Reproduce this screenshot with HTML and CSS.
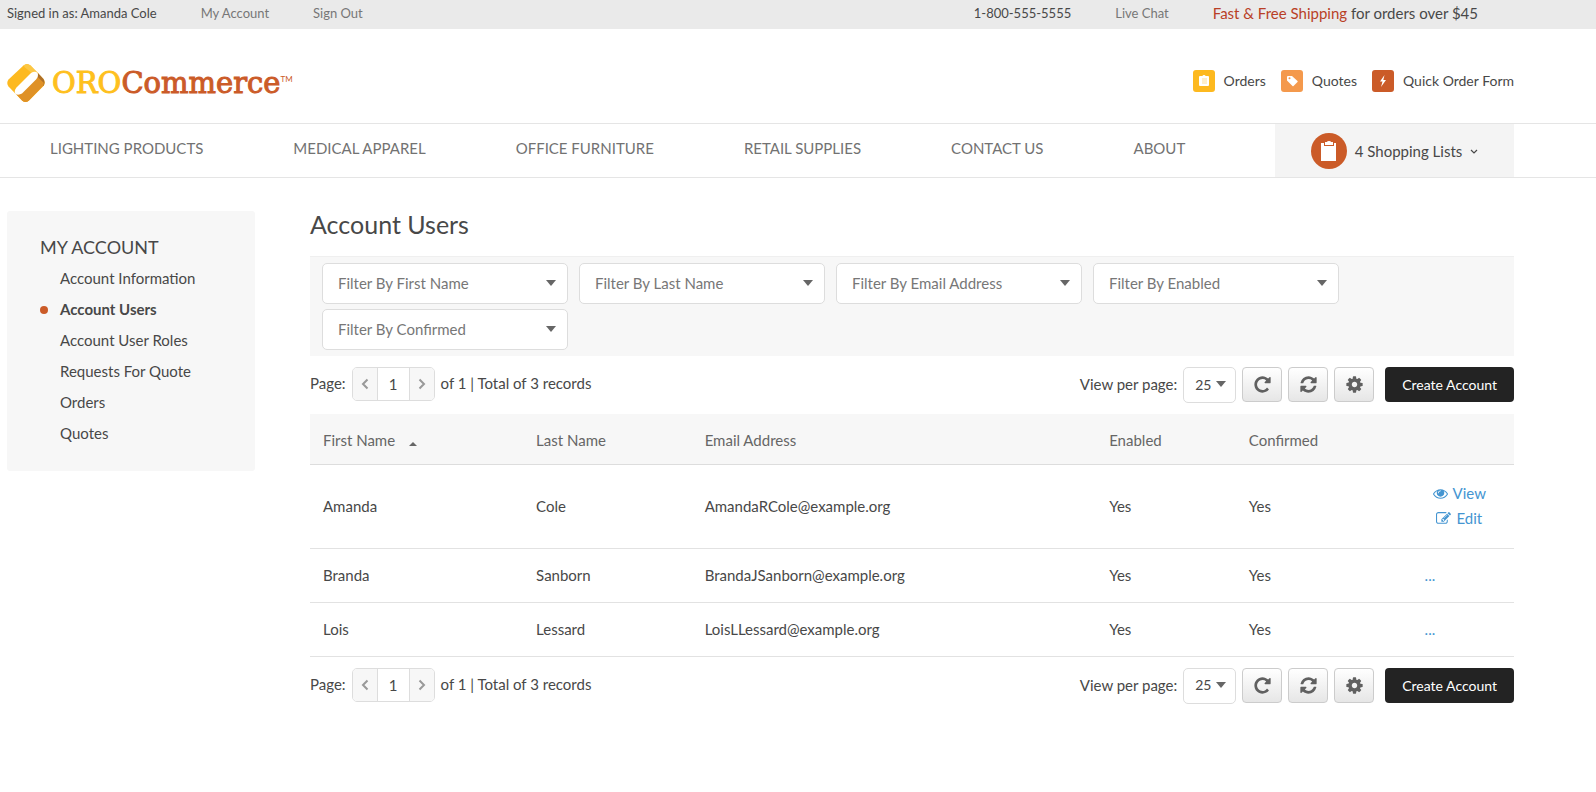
FILE: index.html
```html
<!DOCTYPE html>
<html lang="en">
<head>
    <meta charset="UTF-8">
    <meta name="viewport" content="width=device-width, initial-scale=1.0">
    <title>Account Users</title>
    <link rel="stylesheet" href="styles.css">
</head>
<body>
    <!-- shared icons -->
    <svg class="sprite" aria-hidden="true">
        <symbol id="icon-repeat" viewBox="0 0 1792 1792"><path d="M1664 256v448q0 26-19 45t-45 19h-448q-42 0-59-40-17-39 14-69l138-138q-148-137-349-137-104 0-198.500 40.500t-163.500 109.500-109.500 163.500-40.500 198.500 40.500 198.500 109.500 163.500 163.500 109.500 198.500 40.500q119 0 225-52t179-147q7-10 23-12 15 0 25 9l137 138q9 8 9.500 20.500t-7.500 22.500q-109 132-264 204.500t-327 72.500q-156 0-298-61t-245-164-164-245-61-298 61-298 164-245 245-164 298-61q147 0 284.500 55.500t244.500 156.500l130-129q29-31 70-14 39 17 39 59z"/></symbol>
        <symbol id="icon-refresh" viewBox="0 0 1792 1792"><path d="M1639 1056q0 5-1 7-64 268-268 434.500t-478 166.500q-146 0-282.500-55t-243.500-157l-129 129q-19 19-45 19t-45-19-19-45v-448q0-26 19-45t45-19h448q26 0 45 19t19 45-19 45l-137 137q71 66 161 102t187 36q134 0 250-65t186-179q11-17 53-117 8-23 30-23h192q13 0 22.500 9.500t9.500 22.500zm25-800v448q0 26-19 45t-45 19h-448q-26 0-45-19t-19-45 19-45l138-138q-148-137-349-137-134 0-250 65t-186 179q-11 17-53 117-8 23-30 23h-199q-13 0-22.500-9.500t-9.500-22.500v-7q65-268 270-434.500t480-166.500q146 0 284 55.500t245 156.500l130-129q19-19 45-19t45 19 19 45z"/></symbol>
        <symbol id="icon-cog" viewBox="0 0 1792 1792"><path d="M1152 896q0-106-75-181t-181-75-181 75-75 181 75 181 181 75 181-75 75-181zm512-109v222q0 12-8 23t-20 13l-185 28q-19 54-39 91 35 50 107 138 10 12 10 25t-9 23q-27 37-99 108t-94 71q-12 0-26-9l-138-108q-44 23-91 38-16 136-29 186-7 28-36 28h-222q-14 0-24.500-8.500t-11.500-21.500l-28-184q-49-16-90-37l-141 107q-10 9-25 9-14 0-25-11-126-114-165-168-7-10-7-23 0-12 8-23 15-21 51-66.500t54-70.500q-27-50-41-99l-183-27q-13-2-21-12.500t-8-23.500v-222q0-12 8-23t19-13l186-28q14-46 39-92-40-57-107-138-10-12-10-24 0-10 9-23 26-36 98.500-107.500t94.500-71.500q13 0 26 10l138 107q44-23 91-38 16-136 29-186 7-28 36-28h222q14 0 24.500 8.500t11.500 21.500l28 184q49 16 90 37l142-107q9-9 24-9 13 0 25 10 129 119 165 170 7 8 7 22 0 12-8 23-15 21-51 66.500t-54 70.500q26 50 41 98l183 28q13 2 21 12.500t8 23.500z"/></symbol>
        <symbol id="icon-eye" viewBox="0 0 1792 1792"><path d="M1664 960q-152-236-381-353 61 104 61 225 0 185-131.500 316.500t-316.500 131.500-316.500-131.500-131.500-316.500q0-121 61-225-229 117-381 353 133 205 333.500 326.500t434.500 121.500 434.500-121.500 333.500-326.500zm-720-384q0-20-14-34t-34-14q-125 0-214.500 89.500t-89.500 214.500q0 20 14 34t34 14 34-14 14-34q0-86 61-147t147-61q20 0 34-14t14-34zm848 384q0 34-20 69-140 230-376.500 368.500t-499.500 138.500-499.500-139-376.500-368q-20-35-20-69t20-69q140-229 376.500-368t499.500-139 499.500 139 376.500 368q20 35 20 69z"/></symbol>
        <symbol id="icon-edit" viewBox="0 0 1792 1792"><path d="M888 1184l116-116-152-152-116 116v56h96v96h56zm440-720q-16-16-33 1l-350 350q-17 17-1 33t33-1l350-350q17-17 1-33zm80 594v190q0 119-84.500 203.500t-203.500 84.500h-832q-119 0-203.500-84.500t-84.500-203.500v-832q0-119 84.500-203.500t203.500-84.500h832q63 0 117 25 15 7 18 23 3 17-9 29l-49 49q-14 14-32 8-23-6-45-6h-832q-66 0-113 47t-47 113v832q0 66 47 113t113 47h832q66 0 113-47t47-113v-126q0-13 9-22l64-64q15-15 35-7t20 29zm-96-738l288 288-672 672h-288v-288zm444 132l-92 92-288-288 92-92q28-28 68-28t68 28l152 152q28 28 28 68t-28 68z"/></symbol>
        <symbol id="icon-left" viewBox="0 0 8 12"><path d="M6.500 1.500L2 6l4.500 4.500" fill="none" stroke="currentColor" stroke-width="2"/></symbol>
        <symbol id="icon-right" viewBox="0 0 8 12"><path d="M1.500 1.500L6 6l-4.500 4.500" fill="none" stroke="currentColor" stroke-width="2"/></symbol>
    </svg>

    <div class="topbar">
        <div class="topbar-left">
            <span>Signed in as: Amanda Cole</span>
            <a href="#">My Account</a>
            <a href="#">Sign Out</a>
        </div>
        <div class="topbar-right">
            <span>1-800-555-5555</span>
            <a href="#">Live Chat</a>
            <span class="promo"><strong>Fast &amp; Free Shipping</strong> for orders over $45</span>
        </div>
    </div>

    <header class="header">
        <a class="logo" href="#">
            <svg class="logo-mark" viewBox="0 0 38 38" aria-hidden="true">
                <path d="M16.500 1.500q3.500-3 7 0L36.500 15q2.500 3.500 0 7L22 36.500q-3.500 3-7 0L1.500 22.500q-2.500-3.500 0-7z" fill="#fdb91f"/>
                <path d="M16.500 1.500q3.500-3 7 0L31 9l-4 2-9-7.500z" fill="#fcc745"/>
                <path d="M31 9l5.500 6q2 3.500 0 7L26 18z" fill="#ad6f28"/>
                <path d="M29.500 12l7 6.500q.5 1.500-.5 3.500L22 36.500q-3.500 3-7 0L9.500 30.500z" fill="#df9126"/>
                <path d="M24 9q4-2.500 6.500 0 1.500 3-1.500 6.500L15 29.500q-3.500 2-6.500.5-2-3 1-6.500z" fill="#fff"/>
            </svg>
            <span class="logo-text"><span class="logo-oro">ORO</span>Commerce</span><span class="logo-tm">TM</span>
        </a>
        <div class="quick-links">
            <a href="#">
                <svg class="quick-icon quick-orders" viewBox="0 0 22 22" aria-hidden="true">
                    <path d="M7 6h2.500q0-1 1.500-1t1.500 1H15q1 0 1 1v8q0 1-1 1H7q-1 0-1-1V7q0-1 1-1z" fill="#fff"/>
                    <path d="M9 8h5v6H9z" fill="#fdeecb"/>
                </svg>
                Orders
            </a>
            <a href="#">
                <svg class="quick-icon quick-quotes" viewBox="0 0 22 22" aria-hidden="true">
                    <path fill-rule="evenodd" d="M6 7q0-1 1-1h4l5.500 5q.5.500 0 1l-4 4q-.5.500-1 0L6 10.500zm1.500 1.200a1 1 0 1 0 2 0a1 1 0 1 0-2 0z" fill="#fff"/>
                </svg>
                Quotes
            </a>
            <a href="#">
                <svg class="quick-icon quick-form" viewBox="0 0 22 22" aria-hidden="true">
                    <path d="M12.500 5L8 11.500h2.500L9 17l5-7h-2.700z" fill="#fff"/>
                </svg>
                Quick Order Form
            </a>
        </div>
    </header>

    <div class="navbar">
        <nav class="menu">
            <a href="#">LIGHTING PRODUCTS</a>
            <a href="#">MEDICAL APPAREL</a>
            <a href="#">OFFICE FURNITURE</a>
            <a href="#">RETAIL SUPPLIES</a>
            <a href="#">CONTACT US</a>
            <a href="#">ABOUT</a>
        </nav>
        <button class="lists" type="button">
            <svg class="lists-icon" viewBox="0 0 36 36" aria-hidden="true">
                <circle cx="18" cy="18" r="18" fill="#cb5b28"/>
                <path d="M10 10h3v3h10v-3h2v18H10z" fill="#fff"/>
                <path d="M14 9h2q0-1 2-1t2 1h2v3h-8z" fill="#fff"/>
            </svg>
            4 Shopping Lists
            <svg class="lists-arrow" viewBox="0 0 8 8" aria-hidden="true"><path d="M1 3l3 3 3-3" fill="none" stroke="currentColor" stroke-width="1.200"/></svg>
        </button>
    </div>

    <div class="page">
        <aside class="sidebar">
            <h2>MY ACCOUNT</h2>
            <ul>
                <li><a href="#">Account Information</a></li>
                <li class="active"><a href="#">Account Users</a></li>
                <li><a href="#">Account User Roles</a></li>
                <li><a href="#">Requests For Quote</a></li>
                <li><a href="#">Orders</a></li>
                <li><a href="#">Quotes</a></li>
            </ul>
        </aside>

        <main class="content">
            <h1>Account Users</h1>

            <div class="filters">
                <select aria-label="First name filter"><option>Filter By First Name</option></select>
                <select aria-label="Last name filter"><option>Filter By Last Name</option></select>
                <select aria-label="Email address filter"><option>Filter By Email Address</option></select>
                <select aria-label="Enabled filter"><option>Filter By Enabled</option></select>
                <select aria-label="Confirmed filter"><option>Filter By Confirmed</option></select>
            </div>

            <div class="toolbar">
                <div class="pager">
                    <label for="page-top">Page:</label>
                    <div class="pager-box">
                        <button type="button" aria-label="Previous page"><svg><use href="#icon-left"/></svg></button>
                        <input type="text" id="page-top" value="1">
                        <button type="button" aria-label="Next page"><svg><use href="#icon-right"/></svg></button>
                    </div>
                    <span>of 1 | Total of 3 records</span>
                </div>
                <div class="tools">
                    <label for="size-top">View per page:</label>
                    <select class="page-size" id="size-top"><option>10</option><option selected>25</option><option>50</option></select>
                    <button class="tool" type="button" aria-label="Refresh"><svg><use href="#icon-repeat"/></svg></button>
                    <button class="tool" type="button" aria-label="Reset"><svg><use href="#icon-refresh"/></svg></button>
                    <button class="tool" type="button" aria-label="Grid settings"><svg><use href="#icon-cog"/></svg></button>
                    <button class="create" type="button">Create Account</button>
                </div>
            </div>

            <table class="grid">
                <colgroup>
                    <col class="col-first">
                    <col class="col-last">
                    <col class="col-email">
                    <col class="col-enabled">
                    <col class="col-confirmed">
                    <col class="col-actions">
                </colgroup>
                <thead>
                    <tr>
                        <th>First Name <span class="sort"></span></th>
                        <th>Last Name</th>
                        <th>Email Address</th>
                        <th>Enabled</th>
                        <th>Confirmed</th>
                        <th></th>
                    </tr>
                </thead>
                <tbody>
                    <tr>
                        <td>Amanda</td>
                        <td>Cole</td>
                        <td>AmandaRCole@example.org</td>
                        <td>Yes</td>
                        <td>Yes</td>
                        <td>
                            <div class="actions">
                                <a href="#"><svg><use href="#icon-eye"/></svg>View</a>
                                <a href="#"><svg><use href="#icon-edit"/></svg>Edit</a>
                            </div>
                        </td>
                    </tr>
                    <tr>
                        <td>Branda</td>
                        <td>Sanborn</td>
                        <td>BrandaJSanborn@example.org</td>
                        <td>Yes</td>
                        <td>Yes</td>
                        <td><a class="more" href="#">...</a></td>
                    </tr>
                    <tr>
                        <td>Lois</td>
                        <td>Lessard</td>
                        <td>LoisLLessard@example.org</td>
                        <td>Yes</td>
                        <td>Yes</td>
                        <td><a class="more" href="#">...</a></td>
                    </tr>
                </tbody>
            </table>

            <div class="toolbar">
                <div class="pager">
                    <label for="page-bottom">Page:</label>
                    <div class="pager-box">
                        <button type="button" aria-label="Previous page"><svg><use href="#icon-left"/></svg></button>
                        <input type="text" id="page-bottom" value="1">
                        <button type="button" aria-label="Next page"><svg><use href="#icon-right"/></svg></button>
                    </div>
                    <span>of 1 | Total of 3 records</span>
                </div>
                <div class="tools">
                    <label for="size-bottom">View per page:</label>
                    <select class="page-size" id="size-bottom"><option>10</option><option selected>25</option><option>50</option></select>
                    <button class="tool" type="button" aria-label="Refresh"><svg><use href="#icon-repeat"/></svg></button>
                    <button class="tool" type="button" aria-label="Reset"><svg><use href="#icon-refresh"/></svg></button>
                    <button class="tool" type="button" aria-label="Grid settings"><svg><use href="#icon-cog"/></svg></button>
                    <button class="create" type="button">Create Account</button>
                </div>
            </div>
        </main>
    </div>
</body>
</html>
```
FILE: styles.css
```css
* {
    box-sizing: border-box;
}
body {
    font-family: Lato, sans-serif;
    font-size: 15px;
    line-height: 20px;
    color: #484848;
    background: #fff;
    margin: 0;
}
a {
    color: inherit;
    text-decoration: none;
}
button, input, select {
    font-family: inherit;
    font-size: 15px;
    color: inherit;
    margin: 0;
}
button {
    cursor: pointer;
}
.sprite {
    display: none;
}

/* top bar */
.topbar {
    display: flex;
    justify-content: space-between;
    height: 29px;
    padding: 0 118px 0 7px;
    background: #eaeaea;
    font-size: 13px;
    line-height: 27px;
}
.topbar-left, .topbar-right {
    display: flex;
    gap: 44px;
}
.topbar a {
    color: #777;
}
.promo {
    font-size: 15px;
}
.promo strong {
    color: #b93f26;
    font-weight: normal;
}

/* header */
.header {
    display: flex;
    justify-content: space-between;
    align-items: center;
    height: 94px;
    padding: 14px 82px 0 7px;
}
.logo {
    display: flex;
    align-items: center;
    color: #cb5b28;
}
.logo-mark {
    width: 38px;
    height: 38px;
    margin-right: 7px;
}
.logo-text {
    font-family: "DejaVu Serif", serif;
    font-size: 29px;
    line-height: 38px;
    -webkit-text-stroke: 1px;
}
.logo-oro {
    color: #fec01e;
}
.logo-tm {
    align-self: flex-start;
    font-size: 8px;
    line-height: 30px;
}
.quick-links {
    display: flex;
    gap: 15px;
    padding-bottom: 4px;
    font-size: 14px;
}
.quick-links a {
    display: flex;
    align-items: center;
    gap: 9px;
}
.quick-icon {
    width: 22px;
    height: 22px;
    border-radius: 3px;
}
.quick-orders {
    background: #fdb91f;
}
.quick-quotes {
    background: #f4994c;
}
.quick-form {
    background: #cb5b28;
}

/* navigation */
.navbar {
    display: flex;
    justify-content: space-between;
    height: 55px;
    padding: 0 82px 0 7px;
    border-top: 1px solid #e5e5e5;
    border-bottom: 1px solid #e5e5e5;
}
.menu {
    display: flex;
    gap: 90px;
    padding-left: 43px;
    color: #727272;
    line-height: 49px;
    white-space: nowrap;
}
.lists {
    display: flex;
    align-items: center;
    justify-content: center;
    gap: 8px;
    width: 239px;
    border: none;
    background: #f4f4f4;
}
.lists-icon {
    width: 36px;
    height: 36px;
}
.lists-arrow {
    width: 8px;
    height: 8px;
}

/* page */
.page {
    display: flex;
    align-items: flex-start;
    gap: 55px;
    padding: 33px 82px 40px 7px;
}
.sidebar {
    width: 248px;
    padding: 26px 33px 22px;
    background: #f7f7f7;
    border-radius: 3px;
}
.sidebar h2 {
    margin: 0;
    font-size: 18px;
    font-weight: normal;
    line-height: 21px;
}
.sidebar ul {
    list-style: none;
    margin: 0;
    padding: 5px 0 0;
}
.sidebar li {
    display: flex;
    align-items: center;
    padding-left: 20px;
    line-height: 31px;
}
.sidebar .active {
    padding-left: 0;
    font-weight: bold;
}
.active::before {
    content: "";
    width: 8px;
    height: 8px;
    margin-right: 12px;
    border-radius: 50%;
    background: #cb5b28;
}
.content {
    flex: 1;
}
h1 {
    margin: 0 0 19px;
    font-size: 25px;
    font-weight: normal;
    line-height: 26px;
}
.filters {
    display: flex;
    flex-wrap: wrap;
    gap: 5px 11px;
    padding: 6px 12px;
    border-top: 1px solid #efefef;
    background: #f7f7f7;
}
.filters select {
    width: 246px;
    height: 41px;
    padding: 0 15px 2px;
    border: 1px solid #ddd;
    border-radius: 5px;
    appearance: none;
    color: #777;
    background: #fff url("data:image/svg+xml,%3Csvg xmlns='http://www.w3.org/2000/svg' width='10' height='6'%3E%3Cpath d='M0 0h10L5 6z' fill='%23666'/%3E%3C/svg%3E") no-repeat right 11px top 16px;
}

/* toolbar */
.toolbar {
    display: flex;
    justify-content: space-between;
    align-items: flex-start;
    padding: 11px 0;
}
.pager, .tools {
    display: flex;
    align-items: flex-start;
    line-height: 33px;
}
.pager {
    gap: 6px;
}
.pager-box {
    display: flex;
    height: 34px;
    border: 1px solid #ddd;
    border-radius: 5px;
    overflow: hidden;
}
.pager-box button {
    display: flex;
    align-items: center;
    justify-content: center;
    width: 24px;
    padding: 0;
    border: none;
    background: #f7f7f7;
    color: #999;
}
.pager-box svg {
    width: 8px;
    height: 12px;
}
.pager-box input {
    width: 33px;
    padding: 0;
    border: 1px solid #ddd;
    border-width: 0 1px;
    text-align: center;
}
.tools {
    gap: 6px;
    line-height: 35px;
}
.page-size {
    width: 53px;
    height: 36px;
    padding: 0 11px 2px;
    border: 1px solid #ddd;
    border-radius: 5px;
    appearance: none;
    font-size: 14px;
    background: #fff url("data:image/svg+xml,%3Csvg xmlns='http://www.w3.org/2000/svg' width='10' height='6'%3E%3Cpath d='M0 0h10L5 6z' fill='%23666'/%3E%3C/svg%3E") no-repeat right 9px top 13px;
}
.tool {
    display: flex;
    align-items: center;
    justify-content: center;
    width: 40px;
    height: 35px;
    padding: 0;
    border: 1px solid #ccc;
    border-radius: 4px;
    background: linear-gradient(#fff, #e6e6e6);
}
.tool svg {
    width: 19px;
    height: 19px;
    fill: #606060;
}
.create {
    height: 35px;
    margin-left: 5px;
    padding: 0 17px;
    border: none;
    border-radius: 4px;
    background: #232323;
    color: #fff;
    font-size: 14px;
}

/* users grid */
.grid {
    width: 100%;
    table-layout: fixed;
    border-collapse: collapse;
}
.col-first {
    width: 17.7%;
}
.col-last {
    width: 14%;
}
.col-email {
    width: 33.6%;
}
.col-enabled {
    width: 11.6%;
}
.col-confirmed {
    width: 14.6%;
}
.grid th {
    height: 50px;
    padding: 2px 13px 0;
    border-bottom: 1px solid #ddd;
    background: #f7f7f7;
    color: #666;
    font-weight: normal;
    text-align: left;
}
.grid td {
    padding: 16px 13px 17px;
    border-bottom: 1px solid #e2e2e2;
}
.sort {
    display: inline-block;
    margin-left: 10px;
    border: 4px solid transparent;
    border-top: none;
    border-bottom-color: #666;
}
.actions {
    display: inline-flex;
    flex-direction: column;
    align-items: center;
    vertical-align: top;
    padding-left: 8px;
}
.actions a {
    display: flex;
    align-items: center;
    gap: 5px;
    line-height: 25px;
}
.actions svg {
    width: 15px;
    height: 15px;
    fill: currentColor;
}
.actions a, .more {
    color: #4495d1;
}
```
